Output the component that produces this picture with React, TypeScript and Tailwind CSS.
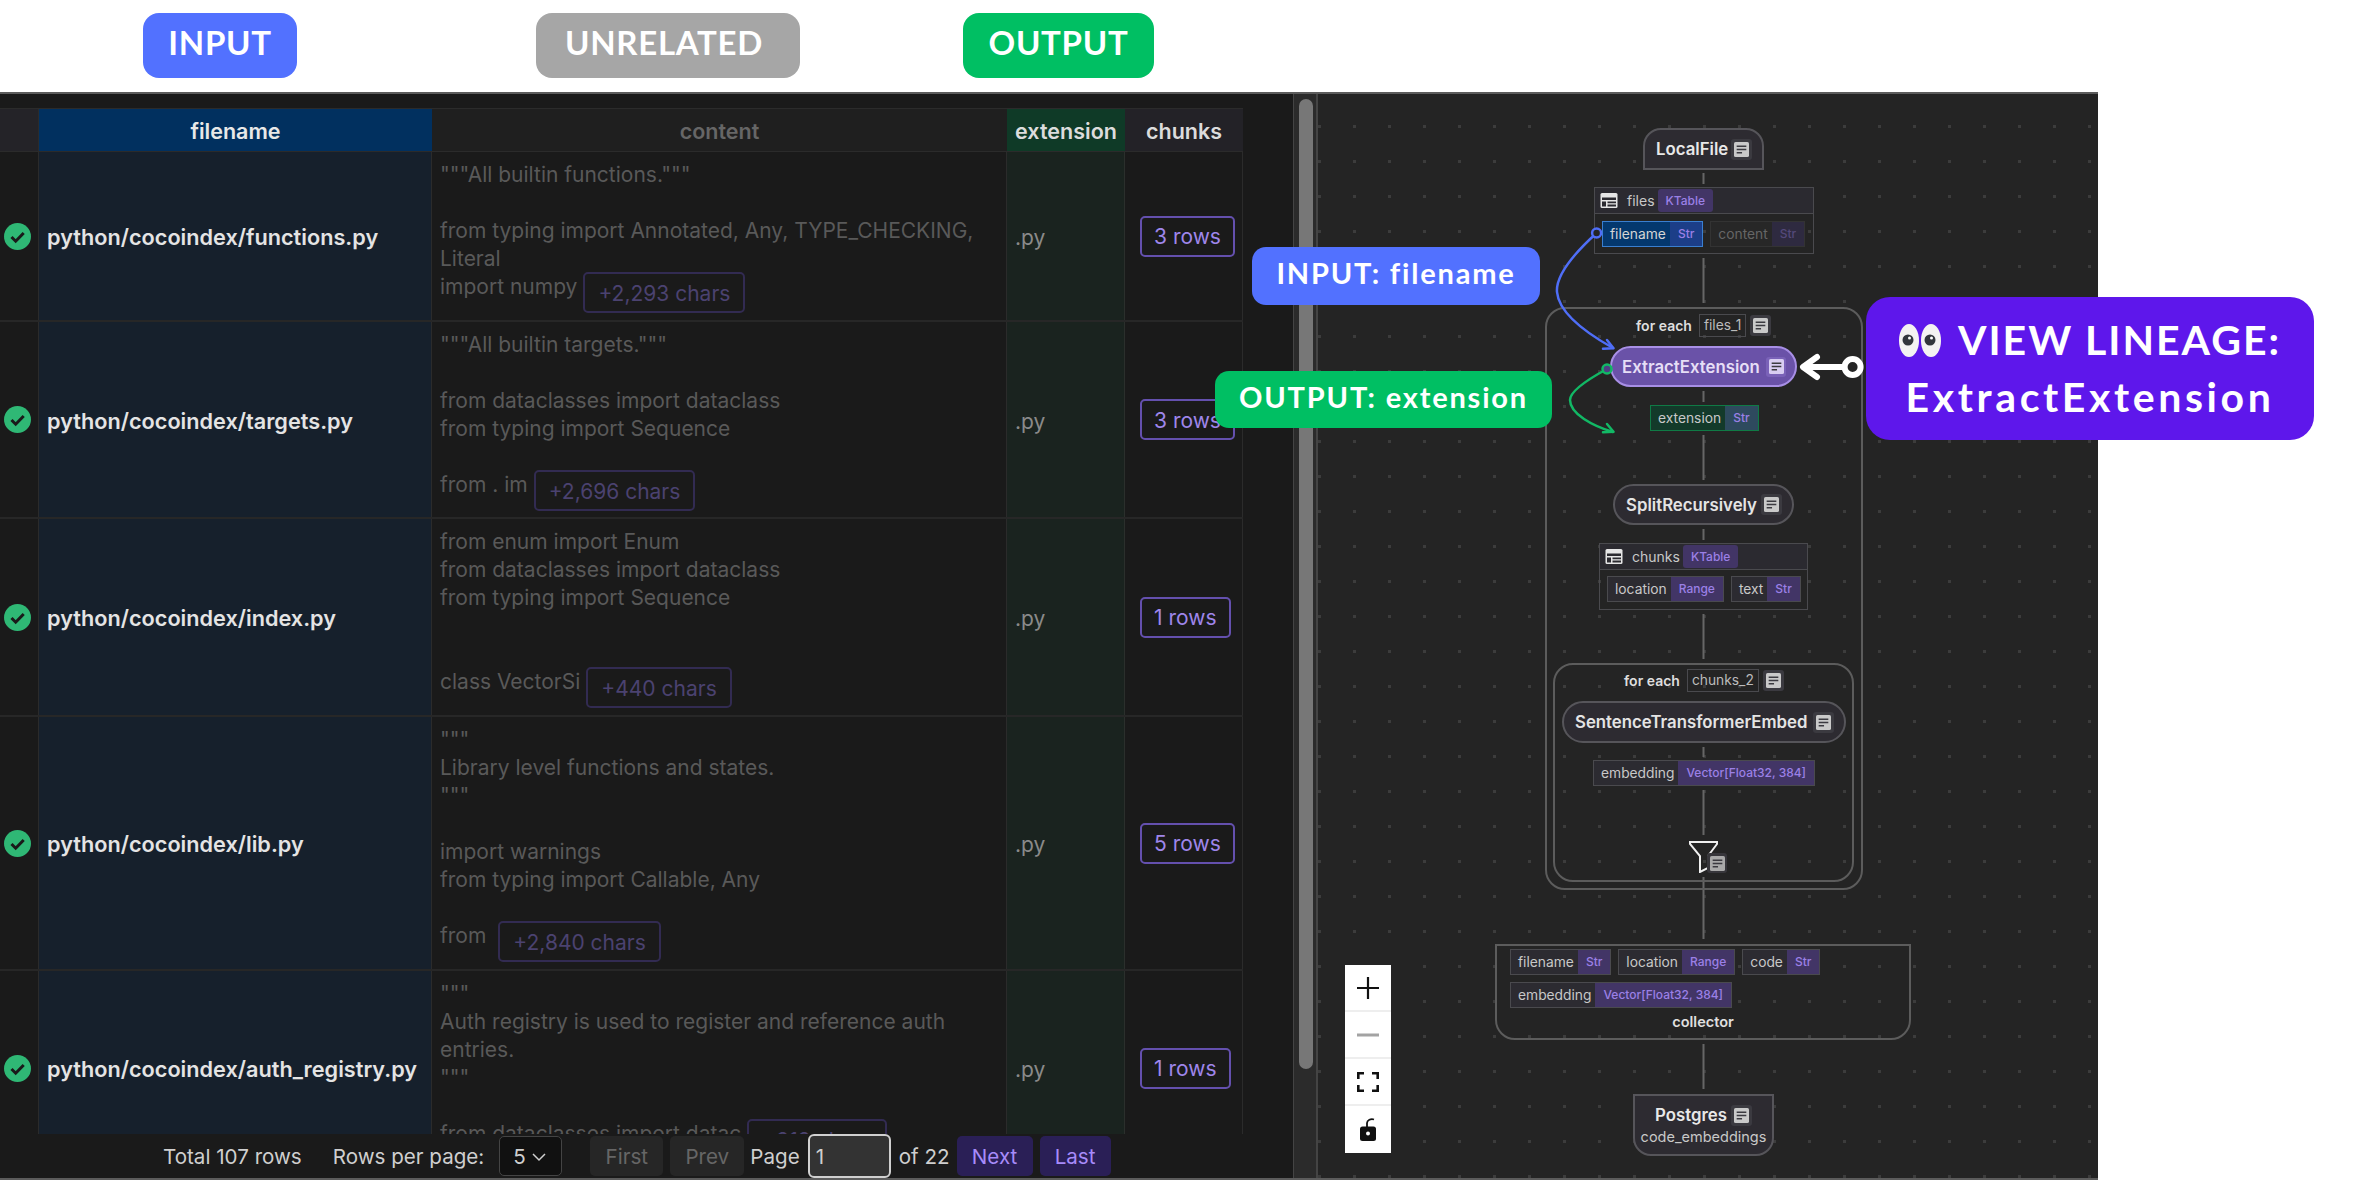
import React from "react";

type Row = {
  file: string;
  height: string;
  lines: string[];
  tail: string;
  extra: string;
  count: number;
  gap: string;
};

const rows: Row[] = [
  {
    file: "python/cocoindex/functions.py",
    height: "h-[170px]",
    lines: ['"""All builtin functions."""', "", "from typing import Annotated, Any, TYPE_CHECKING,", "Literal"],
    tail: "import numpy",
    extra: "+2,293 chars",
    count: 3,
    gap: "ml-[6px]",
  },
  {
    file: "python/cocoindex/targets.py",
    height: "h-[197px]",
    lines: ['"""All builtin targets."""', "", "from dataclasses import dataclass", "from typing import Sequence", ""],
    tail: "from . im",
    extra: "+2,696 chars",
    count: 3,
    gap: "ml-[6px]",
  },
  {
    file: "python/cocoindex/index.py",
    height: "h-[198px]",
    lines: ["from enum import Enum", "from dataclasses import dataclass", "from typing import Sequence", "", ""],
    tail: "class VectorSi",
    extra: "+440 chars",
    count: 1,
    gap: "ml-[6px]",
  },
  {
    file: "python/cocoindex/lib.py",
    height: "h-[254px]",
    lines: ['"""', "Library level functions and states.", '"""', "", "import warnings", "from typing import Callable, Any", ""],
    tail: "from",
    extra: "+2,840 chars",
    count: 5,
    gap: "ml-[12px]",
  },
  {
    file: "python/cocoindex/auth_registry.py",
    height: "h-[196px]",
    lines: ['"""', "Auth registry is used to register and reference auth", "entries.", '"""', ""],
    tail: "from dataclasses import datac",
    extra: "+919 chars",
    count: 1,
    gap: "ml-[6px]",
  },
];

function CheckBadge() {
  return (
    <svg width="27" height="27" viewBox="0 0 27 27">
      <circle cx="13.5" cy="13.5" r="13.5" fill="#2fb875" />
      <path d="M7.5 14l4.2 4.2 8-8.2" fill="none" stroke="#1a1a1a" strokeWidth="3" />
    </svg>
  );
}

function TableRow({ row }: { row: Row }) {
  return (
    <div className={`flex shrink-0 border-b-2 border-[#272727] ${row.height}`}>
      <div className="flex w-[39px] shrink-0 items-center border-r border-[#2b2b2b] pl-[4px]">
        <CheckBadge />
      </div>
      <div className="flex w-[393px] shrink-0 items-center border-r border-[#2b2b2b] bg-[#16202c] pl-[8px] pt-[2px] text-[21.7px] font-semibold text-[#e4e4e4]">
        {row.file}
      </div>
      <div className="w-[575px] shrink-0 border-r border-[#2b2b2b] pl-[8px] pt-[9px] text-[#595959]">
        {row.lines.map((line, i) => (
          <div key={i} className="h-[28px] whitespace-pre">
            {line}
          </div>
        ))}
        <div className="flex h-[28px] items-start whitespace-pre">
          <span>{row.tail}</span>
          <span
            className={`mt-[-1px] flex h-[41px] shrink-0 items-center rounded-[5px] border-2 border-[#322b52] px-[13px] pt-[3px] text-[#4b4270] ${row.gap}`}
          >
            {row.extra}
          </span>
        </div>
      </div>
      <div className="flex w-[118px] shrink-0 items-center border-r border-[#2b2f2c] bg-[#1a231f] pl-[8px] pt-[4px] text-[#8a8a8a]">
        .py
      </div>
      <div className="flex w-[118px] shrink-0 items-center border-r border-[#2b2b2b] pl-[15px]">
        <span className="flex h-[41px] items-center rounded-[5px] border-2 border-[#6450ae] px-[12px] pt-[2px] text-[#9f86ea]">
          {row.count} rows
        </span>
      </div>
    </div>
  );
}

function LeftTable() {
  return (
    <div className="flex h-full w-[1293px] shrink-0 flex-col bg-[#1a1a1a] pt-[14px] font-['Inter',sans-serif] text-[21px] leading-[28px]">
      <div className="flex-1 overflow-hidden">
        <div className="w-[1243px]">
          <div className="flex h-[44px] border-y border-[#2b2b2b] text-center text-[21.5px] font-semibold">
            <div className="w-[39px] shrink-0 border-r border-[#2b2b2b] bg-[#242328]" />
            <div className="flex w-[393px] shrink-0 items-center justify-center bg-[#01305f] pt-[2px] text-[#e8e8e8]">filename</div>
            <div className="flex w-[575px] shrink-0 items-center justify-center bg-[#1f1f1f] pt-[2px] text-[#666]">content</div>
            <div className="flex w-[118px] shrink-0 items-center justify-center bg-[#0f3a27] pt-[2px] text-[#dcdcdc]">extension</div>
            <div className="flex w-[118px] shrink-0 items-center justify-center bg-[#232227] pt-[2px] text-[#dcdcdc]">chunks</div>
          </div>
          {rows.map((row) => (
            <TableRow key={row.file} row={row} />
          ))}
        </div>
      </div>
      <div className="flex h-[44px] shrink-0 items-center pl-[163px] text-[20.6px] text-[#cfcfcf]">
        <span className="pt-[2px]">Total 107 rows</span>
        <span className="ml-[31px] pt-[2px]">Rows per page:</span>
        <span className="ml-[15px] flex h-[40px] w-[63px] items-center gap-[6px] rounded-[5px] border border-[#444] bg-[#111] pl-[13px] pt-[2px]">
          5
          <svg width="14" height="9" viewBox="0 0 14 9" fill="none" stroke="#cfcfcf" strokeWidth="1.5">
            <path d="M1 1l6 6 6-6" />
          </svg>
        </span>
        <span className="ml-[28px] flex h-[40px] w-[73px] items-center justify-center rounded-[5px] bg-[#262626] pt-[2px] text-[#666]">First</span>
        <span className="ml-[7px] flex h-[40px] w-[74px] items-center justify-center rounded-[5px] bg-[#262626] pt-[2px] text-[#666]">Prev</span>
        <span className="ml-[6px] pt-[2px]">Page</span>
        <span className="ml-[8px] flex h-[44px] w-[83px] items-center rounded-[6px] border-2 border-[#d0d0d0] bg-[#333] pl-[6px] pt-[2px]">1</span>
        <span className="ml-[8px] pt-[2px]">of 22</span>
        <span className="ml-[7px] flex h-[40px] w-[76px] items-center justify-center rounded-[5px] bg-[#2a1f56] pt-[2px] text-[#a78bfa]">Next</span>
        <span className="ml-[7px] flex h-[40px] w-[71px] items-center justify-center rounded-[5px] bg-[#2a1f56] pt-[2px] text-[#a78bfa]">Last</span>
      </div>
    </div>
  );
}

function NoteIcon({ box = "h-[21px] w-[21px]", tint = "#c9c9c9", bg = "bg-[#3b3a40]" }: { box?: string; tint?: string; bg?: string }) {
  return (
    <span className={`flex shrink-0 items-center justify-center rounded-[3px] ${box} ${bg}`}>
      <svg width="15" height="15" viewBox="0 0 14 14">
        <rect width="14" height="14" rx="1.5" fill={tint} />
        <path d="M2.5 4h9M2.5 7h9M2.5 10h5" stroke="#3b3a40" strokeWidth="1.3" />
      </svg>
    </span>
  );
}

function TableIcon() {
  return (
    <svg width="18" height="15" viewBox="0 0 17 15" className="shrink-0">
      <rect width="17" height="15" rx="1.5" fill="#e6e6e6" />
      <path d="M1.5 4.5h14v2.6h-14zM1.5 8.6h4v4.9h-4zM7 8.6h8.5v1.6H7zM7 11.4h8.5v2.1H7z" fill="#2b2a30" />
    </svg>
  );
}

type ChipTone = "plain" | "input" | "dim" | "output";

const chipTones: Record<ChipTone, { box: string; name: string; type: string }> = {
  plain: { box: "border-[#4a4a4e] bg-[#2c2b31]", name: "text-[#c8c8c8]", type: "bg-[#423566] text-[#9b80e6]" },
  input: { box: "border-[#3a7fd0] bg-[#04386e]", name: "text-[#d5d5d5]", type: "bg-[#1c3e88] text-[#9b80e6]" },
  dim: { box: "border-[#333] bg-[#272727]", name: "text-[#666]", type: "bg-[#2e2a40] text-[#54497a]" },
  output: { box: "border-[#0f7a45] bg-[#133a2a]", name: "text-[#c8c8c8]", type: "bg-[#2e4a5e] text-[#9b80e6]" },
};

function Chip({ name, type, tone = "plain" }: { name: string; type: string; tone?: ChipTone }) {
  const t = chipTones[tone];
  return (
    <span className={`flex h-[26px] shrink-0 items-stretch border text-[13.8px] leading-[24px] ${t.box}`}>
      <span className={`pl-[7px] pr-[4px] ${t.name}`}>{name}</span>
      <span className={`px-[8px] text-[12px] font-medium ${t.type}`}>{type}</span>
    </span>
  );
}

function KTableHead({ label }: { label: string }) {
  return (
    <div className="flex h-[26px] items-center border-b border-[#4a4a4e] bg-[#2b2a30] pl-[5px]">
      <TableIcon />
      <span className="ml-[9px] text-[14px] text-[#c8c8c8]">{label}</span>
      <span className="ml-[3px] flex h-[23px] items-center rounded-[3px] bg-[#423566] px-[8px] text-[12px] font-medium text-[#9b80e6]">KTable</span>
    </div>
  );
}

function ForEachHead({ name, className }: { name: string; className: string }) {
  return (
    <div className={`absolute flex h-[23px] items-center gap-[7px] ${className}`}>
      <span className="text-[14px] font-semibold text-[#dedede]">for each</span>
      <span className="flex h-[23px] items-center border border-[#4a4a4e] px-[4px] text-[13.8px] text-[#bbb]">{name}</span>
      <NoteIcon box="h-[21px] w-[21px] ml-[-3px]" tint="#c9c9c9" />
    </div>
  );
}

function Pill({ label, className }: { label: string; className: string }) {
  return (
    <div className={`absolute flex items-center justify-between rounded-full border-2 border-[#56555a] bg-[#2d2b31] pl-[11px] pr-[10px] text-[16.8px] font-semibold text-[#e4e4e4] ${className}`}>
      <span className="pt-[2px]">{label}</span>
      <NoteIcon />
    </div>
  );
}

function GraphLines() {
  const links = [
    [79, 90],
    [164, 209],
    [297, 308],
    [341, 386],
    [435, 446],
    [520, 565],
    [653, 663],
    [696, 741],
    [783, 845],
    [950, 995],
  ];
  return (
    <svg className="absolute inset-0 overflow-visible" width="780" height="1084" fill="none">
      {links.map(([a, b]) => (
        <path key={a} d={`M385.5 ${a}V${b}`} stroke="#666" strokeWidth="2" />
      ))}
    </svg>
  );
}

function Annotations() {
  return (
    <svg className="absolute inset-0 z-20 overflow-visible" width="780" height="1084" fill="none" strokeLinecap="round" strokeLinejoin="round">
      <path d="M278.6 139C250 165 238 185 239 198C241 220 270 240 295 254" stroke="#4f6ef7" strokeWidth="2.5" />
      <path d="M289 246l6.5 8.3-10.5.5" stroke="#4f6ef7" strokeWidth="2.5" />
      <circle cx="278.6" cy="139" r="4.5" fill="#242424" stroke="#4f6ef7" strokeWidth="2.5" />
      <path d="M289 275C265 288 252 298 252 306C252 320 275 332 295 338" stroke="#12b865" strokeWidth="2.5" />
      <path d="M289 330l6.5 7.7-10.5.5" stroke="#12b865" strokeWidth="2.5" />
      <circle cx="289" cy="275" r="4.5" fill="#4f3f84" stroke="#12b865" strokeWidth="2.5" />
      <path d="M526 273H486M499 263l-14 10 14 10" stroke="#fff" strokeWidth="6" />
      <circle cx="534.6" cy="273" r="8" stroke="#fff" strokeWidth="6" />
    </svg>
  );
}

function Controls() {
  return (
    <div className="absolute left-[27px] top-[871px] z-10 flex w-[46px] flex-col bg-white">
      <div className="flex h-[47px] items-center justify-center border-b-2 border-[#eee]">
        <svg width="22" height="22" viewBox="0 0 22 22" stroke="#111" strokeWidth="2.2">
          <path d="M11 0v22M0 11h22" />
        </svg>
      </div>
      <div className="flex h-[47px] items-center justify-center border-b-2 border-[#eee]">
        <svg width="22" height="4" viewBox="0 0 22 4" stroke="#a3a3a3" strokeWidth="3">
          <path d="M0 2h22" />
        </svg>
      </div>
      <div className="flex h-[47px] items-center justify-center border-b-2 border-[#eee]">
        <svg width="22" height="20" viewBox="0 0 22 20" fill="none" stroke="#111" strokeWidth="2.6">
          <path d="M1.3 7V1.3H7M15 1.3h5.7V7M1.3 13v5.7H7M15 18.700h5.700V13" />
        </svg>
      </div>
      <div className="flex h-[47px] items-center justify-center">
        <svg width="18" height="24" viewBox="0 0 18 24">
          <path d="M8 9V5a5 4 0 0 1 7-3.500" fill="none" stroke="#111" strokeWidth="1.8" />
          <rect x="1" y="8.500" width="16" height="14.500" rx="2.500" fill="#111" />
          <circle cx="9" cy="15.500" r="2" fill="#fff" />
        </svg>
      </div>
    </div>
  );
}

function EyesIcon() {
  return (
    <svg width="42" height="33" viewBox="0 0 42 33" className="shrink-0">
      <ellipse cx="10" cy="16.500" rx="10" ry="16.500" fill="#f4f2f2" />
      <ellipse cx="32" cy="16.500" rx="10" ry="16.500" fill="#f4f2f2" />
      <circle cx="9" cy="16" r="5.500" fill="#33363d" />
      <circle cx="31" cy="16" r="5.500" fill="#33363d" />
      <circle cx="10.500" cy="14" r="1.500" fill="#fff" />
      <circle cx="32.500" cy="14" r="1.500" fill="#fff" />
    </svg>
  );
}

function Graph() {
  return (
    <div className="relative h-full flex-1 bg-[#242424] bg-[radial-gradient(circle,#3c3c3c_1.5px,transparent_1.6px)] bg-[size:35px_35px] bg-[position:-16px_15px] font-['Inter',sans-serif]">
      <GraphLines />

      <div className="absolute left-[325px] top-[34px] flex h-[42px] w-[121px] items-center rounded-t-[18px] border-2 border-[#56555a] bg-[#2d2b31] pl-[11px] text-[16.8px] font-semibold text-[#e8e8e8]">
        <span className="pt-[2px]">LocalFile</span>
        <NoteIcon box="h-[21px] w-[21px] ml-[3px]" />
      </div>

      <div className="absolute left-[276px] top-[93px] h-[67px] w-[220px] border border-[#4a4a4e]">
        <KTableHead label="files" />
        <div className="flex gap-[7px] px-[7px] pt-[7px]">
          <Chip name="filename" type="Str" tone="input" />
          <Chip name="content" type="Str" tone="dim" />
        </div>
      </div>

      <div className="absolute left-[227px] top-[213px] h-[583px] w-[318px] rounded-[20px] border-2 border-[#5c5c5c]" />
      <ForEachHead name="files_1" className="left-[318px] top-[220px]" />

      <div className="absolute left-[292px] top-[252px] z-10 flex h-[41px] w-[187px] items-center justify-between rounded-full border-2 border-[#a88fe6] bg-[#6a52a8] pl-[10px] pr-[9px] text-[16.8px] font-semibold text-[#e6def6]">
        <span className="pt-[2px]">ExtractExtension</span>
        <NoteIcon bg="bg-[#7a62b8]" tint="#d8cdf2" box="h-[20px] w-[20px]" />
      </div>

      <div className="absolute left-[332px] top-[311px]">
        <Chip name="extension" type="Str" tone="output" />
      </div>

      <Pill label="SplitRecursively" className="left-[295px] top-[390px] h-[41px] w-[181px]" />

      <div className="absolute left-[281px] top-[449px] h-[67px] w-[209px] border border-[#4a4a4e]">
        <KTableHead label="chunks" />
        <div className="flex gap-[7px] px-[7px] pt-[6px]">
          <Chip name="location" type="Range" />
          <Chip name="text" type="Str" />
        </div>
      </div>

      <div className="absolute left-[235px] top-[569px] h-[219px] w-[301px] rounded-[20px] border-2 border-[#5c5c5c]" />
      <ForEachHead name="chunks_2" className="left-[306px] top-[575px]" />

      <Pill label="SentenceTransformerEmbed" className="left-[244px] top-[607px] h-[42px] w-[284px]" />

      <div className="absolute left-[275px] top-[666px]">
        <Chip name="embedding" type="Vector[Float32, 384]" />
      </div>

      <svg className="absolute left-[371px] top-[747px]" width="30" height="32" viewBox="0 0 30 32" fill="none" stroke="#f0f0f0" strokeWidth="2">
        <path d="M1 1h27v2L19 15v12l-8 4V15L1 3z" />
      </svg>
      <div className="absolute left-[389px] top-[759px]">
        <NoteIcon box="h-[20px] w-[20px]" bg="bg-[#37363b]" tint="#a9a9a9" />
      </div>

      <div className="absolute left-[177px] top-[850px] h-[96px] w-[416px] rounded-b-[20px] border-2 border-[#5c5c5c] pl-[13px] pt-[3px]">
        <div className="flex gap-[7px]">
          <Chip name="filename" type="Str" />
          <Chip name="location" type="Range" />
          <Chip name="code" type="Str" />
        </div>
        <div className="mt-[7px] flex">
          <Chip name="embedding" type="Vector[Float32, 384]" />
        </div>
        <div className="pr-[13px] pt-[4px] text-center text-[14.5px] font-semibold leading-[20px] text-[#e0e0e0]">collector</div>
      </div>

      <div className="absolute left-[315px] top-[1000px] flex h-[62px] w-[141px] flex-col items-center rounded-b-[18px] border-2 border-[#56555a] bg-[#2d2b31] pt-[7px]">
        <div className="flex items-center gap-[4px] text-[16.8px] font-semibold leading-[24px] text-[#e8e8e8]">
          Postgres
          <NoteIcon />
        </div>
        <div className="text-[14.5px] leading-[20px] text-[#c8c8c8]">code_embeddings</div>
      </div>

      <Controls />
      <Annotations />

      <div className="absolute left-[-66px] top-[153px] z-30 flex h-[58px] w-[288px] items-center justify-center rounded-[14px] bg-[#5271ff] pb-[6px] font-['Lato',sans-serif] text-[29px] font-bold tracking-[1.8px] text-white">
        INPUT: filename
      </div>
      <div className="absolute left-[-103px] top-[277px] z-30 flex h-[57px] w-[337px] items-center justify-center rounded-[14px] bg-[#00bf63] pb-[6px] font-['Lato',sans-serif] text-[29px] font-bold tracking-[1.8px] text-white">
        OUTPUT: extension
      </div>
      <div className="absolute left-[548px] top-[203px] z-30 flex h-[143px] w-[448px] flex-col items-center justify-center gap-[9px] rounded-[24px] bg-[#5e17eb] font-['Lato',sans-serif] text-[41px] font-bold leading-[48px] tracking-[2px] text-white">
        <div className="flex items-center gap-[17px]">
          <EyesIcon />
          VIEW LINEAGE:
        </div>
        <div className="tracking-[3.6px]">ExtractExtension</div>
      </div>
    </div>
  );
}

export default function App() {
  return (
    <div className="h-[1184px] w-[2364px] overflow-hidden bg-white">
      <div className="flex h-[92px] items-start pl-[143px] pt-[13px] font-['Lato',sans-serif] text-[33px] font-bold tracking-[0.7px] text-white">
        <div className="flex h-[65px] w-[154px] items-center justify-center rounded-[16px] bg-[#5271ff] pb-[5px]">INPUT</div>
        <div className="ml-[239px] flex h-[65px] w-[264px] items-center justify-center rounded-[16px] bg-[#a6a6a6] pb-[5px] pr-[8px]">UNRELATED</div>
        <div className="ml-[163px] flex h-[65px] w-[191px] items-center justify-center rounded-[16px] bg-[#00bf63] pb-[5px]">OUTPUT</div>
      </div>
      <div className="flex h-[1088px] w-[2098px] border-y-2 border-[#5c5c5c]">
        <LeftTable />
        <div className="h-full w-[25px] shrink-0 border-l border-r-2 border-[#444] bg-[#2b2b2b] pl-[5px] pt-[5px]">
          <div className="h-[970px] w-[14px] rounded-full bg-[#777]" />
        </div>
        <Graph />
      </div>
    </div>
  );
}
